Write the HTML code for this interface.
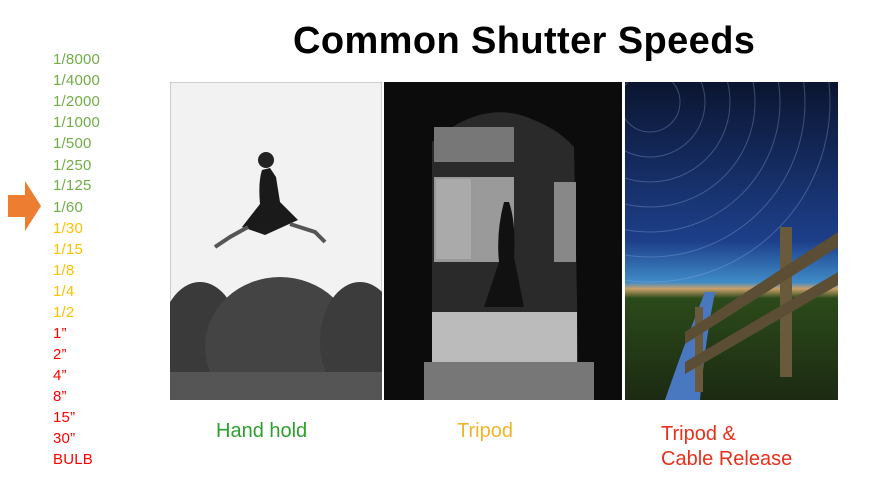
<!DOCTYPE html>
<html><head><meta charset="utf-8"><style>
body{margin:0;width:874px;height:501px;background:#fff;position:relative;overflow:hidden;font-family:"Liberation Sans",sans-serif}
.l{position:absolute;left:53px;font-size:15px;line-height:16px;letter-spacing:0.2px}
.g{color:#70ad47}.y{color:#ffc000}.r{color:#ff0000}
h1{position:absolute;left:293px;top:20px;margin:0;font-size:38px;font-weight:bold;color:#000;letter-spacing:0.4px;white-space:nowrap}
.cap{position:absolute;font-size:20px}
</style></head><body>
<h1>Common Shutter Speeds</h1>
<svg style="position:absolute;left:8px;top:180px" width="34" height="52"><polygon points="0,15 17,15 17,1 33,26 17,51 17,37 0,37" fill="#ed7d31"/></svg>
<div class="l g" style="top:52px">1/8000</div>
<div class="l g" style="top:73px">1/4000</div>
<div class="l g" style="top:94px">1/2000</div>
<div class="l g" style="top:115px">1/1000</div>
<div class="l g" style="top:136px">1/500</div>
<div class="l g" style="top:158px">1/250</div>
<div class="l g" style="top:178px">1/125</div>
<div class="l g" style="top:200px">1/60</div>
<div class="l y" style="top:221px">1/30</div>
<div class="l y" style="top:242px">1/15</div>
<div class="l y" style="top:263px">1/8</div>
<div class="l y" style="top:284px">1/4</div>
<div class="l y" style="top:305px">1/2</div>
<div class="l r" style="top:326px">1”</div>
<div class="l r" style="top:347px">2”</div>
<div class="l r" style="top:368px">4”</div>
<div class="l r" style="top:389px">8”</div>
<div class="l r" style="top:410px">15”</div>
<div class="l r" style="top:431px">30”</div>
<div class="l r" style="top:452px">BULB</div>

<svg style="position:absolute;left:170px;top:82px" width="212" height="318">
<rect width="212" height="318" fill="#f2f2f2" stroke="#aaa"/>
<ellipse cx="30" cy="260" rx="40" ry="60" fill="#3a3a3a"/>
<ellipse cx="110" cy="265" rx="75" ry="70" fill="#444"/>
<ellipse cx="190" cy="260" rx="40" ry="60" fill="#3c3c3c"/>
<rect y="290" width="212" height="28" fill="#555"/>
<path d="M92 88 Q88 100 90 122 L72 145 L95 153 L128 138 L110 120 L106 95 L100 86Z" fill="#1a1a1a"/>
<circle cx="96" cy="78" r="8" fill="#222"/>
<path d="M78 145 L60 155 L45 165 M120 142 L145 150 L155 160" stroke="#555" stroke-width="4" fill="none"/>
</svg>
<svg style="position:absolute;left:384px;top:82px" width="238" height="318">
<rect width="238" height="318" fill="#0c0c0c"/>
<path d="M48 318 L48 60 Q100 15 150 38 Q175 48 190 65 L195 318Z" fill="#2a2a2a"/>
<rect x="50" y="45" width="80" height="35" fill="#777"/>
<rect x="50" y="95" width="80" height="85" fill="#999"/>
<rect x="52" y="97" width="35" height="80" fill="#aaa"/>
<rect x="92" y="97" width="35" height="80" fill="#9a9a9a"/>
<rect x="170" y="100" width="22" height="80" fill="#888"/>
<rect x="48" y="230" width="145" height="50" fill="#bbb"/>
<rect x="40" y="280" width="170" height="38" fill="#777"/>
<path d="M120 120 Q112 150 115 180 L100 225 L140 225 L130 175 Q132 140 125 120Z" fill="#111"/>
</svg>
<svg style="position:absolute;left:625px;top:82px" width="213" height="318">
<defs><linearGradient id="s" x1="0" y1="0" x2="0" y2="1"><stop offset="0" stop-color="#0b1530"/><stop offset=".5" stop-color="#1d3f8a"/><stop offset=".63" stop-color="#3f8bc8"/><stop offset=".65" stop-color="#c9a06a"/><stop offset=".68" stop-color="#2b4a1a"/><stop offset="1" stop-color="#1c2a12"/></linearGradient></defs>
<rect width="213" height="318" fill="url(#s)"/>
<g fill="none" stroke="#8fb0e0" stroke-opacity=".35" stroke-width="1">
<circle cx="25" cy="20" r="30"/><circle cx="25" cy="20" r="55"/><circle cx="25" cy="20" r="80"/><circle cx="25" cy="20" r="105"/><circle cx="25" cy="20" r="130"/><circle cx="25" cy="20" r="155"/><circle cx="25" cy="20" r="180"/></g>
<path d="M80 210 Q60 260 40 318 L75 318 Q80 260 90 210Z" fill="#4a78c0"/>
<rect x="155" y="145" width="12" height="150" fill="#6a5a3c"/>
<rect x="70" y="225" width="8" height="85" fill="#6a5a3c"/>
<path d="M60 250 L213 150 L213 165 L60 262Z M60 280 L213 190 L213 203 L60 292Z" fill="#5c4e34"/>
</svg>
<div class="cap" style="left:216px;top:420px;color:#2ca02c">Hand hold</div>
<div class="cap" style="left:457px;top:420px;color:#f0b429">Tripod</div>
<div class="cap" style="left:661px;top:422px;color:#e8301c;line-height:25px">Tripod &amp;<br>Cable Release</div>
</body></html>
